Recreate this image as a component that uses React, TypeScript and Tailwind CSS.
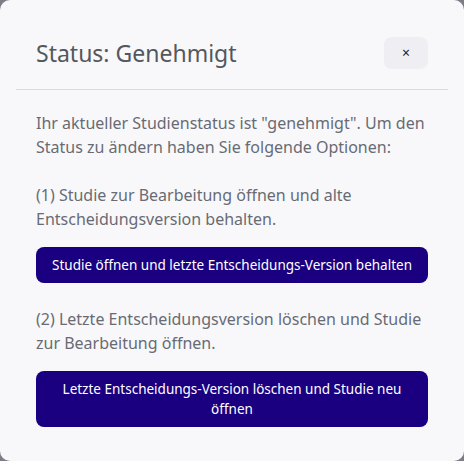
export default function App() {
  return (
    <div className="w-[464px] h-[461px] bg-[#7d7d87] font-['Noto_Sans',sans-serif]">
      <div className="h-full rounded-[10px] bg-[#f8f8fb] px-4">
        <div className="flex items-center justify-between px-5 pt-[37px] pb-5">
          <h2 className="text-[23px] leading-8 text-[#54575e]">Status: Genehmigt</h2>
          <button className="w-11 h-8 rounded-lg bg-[#efeff3] text-[#222] text-sm">×</button>
        </div>
        <div className="border-t border-[#dcdce0]" />
        <div className="px-5 pt-[21px] text-base leading-6 text-[#686b73]">
          <p>
            Ihr aktueller Studienstatus ist "genehmigt". Um den Status zu ändern haben Sie folgende Optionen:
          </p>
          <p className="mt-6">(1) Studie zur Bearbeitung öffnen und alte Entscheidungsversion behalten.</p>
          <button className="mt-4 w-full rounded-lg bg-[#1a0080] px-4 py-2 text-[13.5px] leading-5 text-white">
            Studie öffnen und letzte Entscheidungs-Version behalten
          </button>
          <p className="mt-6">(2) Letzte Entscheidungsversion löschen und Studie zur Bearbeitung öffnen.</p>
          <button className="mt-4 w-full rounded-lg bg-[#1a0080] px-4 py-2 text-[13.5px] leading-5 text-white">
            Letzte Entscheidungs-Version löschen und Studie neu öffnen
          </button>
        </div>
      </div>
    </div>
  );
}
